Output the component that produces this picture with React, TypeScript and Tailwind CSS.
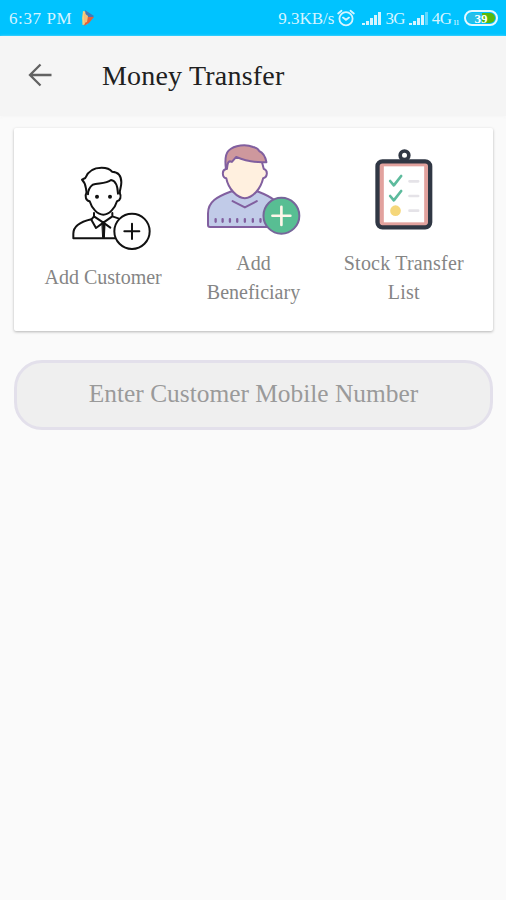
import { type ReactNode } from "react";

const PlayBadge = () => (
  <svg viewBox="0 0 14 18" className="w-[14px] h-[18px]">
    <path d="M2 2Q0.5 9 1.5 16L7 15V3Z" fill="#f6cf7e" />
    <path d="M4 1L13 7L8 12L5 9Z" fill="#3f79b8" />
    <path d="M6 8L13 8L8 14L3 17Z" fill="#e2603c" />
    <path d="M3 4L7 7L6 13L3 14Z" fill="#f4bd78" />
  </svg>
);

const AlarmIcon = () => (
  <svg viewBox="0 0 18 18" className="w-[18px] h-[18px]" fill="none" stroke="#d5f4ff" strokeWidth="1.8" strokeLinecap="round">
    <circle cx="9" cy="9.7" r="6.6" />
    <path d="M1.2 4.5L4.5 1.8M16.8 4.5L13.5 1.8M6 8.6L9 10.8L12 8.6" />
  </svg>
);

const SignalIcon = ({ weak = false }: { weak?: boolean }) => (
  <svg viewBox="0 0 20 15" className="w-[20px] h-[15px]" fill="#d5f4ff">
    <rect x="0" y="12" width="3" height="2" />
    <rect x="4" y="10" width="3" height="4" />
    <rect x="8" y="7" width="3" height="7" />
    <rect x="12" y="4" width="3" height="10" />
    <rect x="16" y="1" width="3" height="13" opacity={weak ? 0.45 : 1} />
  </svg>
);

const BackIcon = () => (
  <svg viewBox="0 0 24 24" className="w-6 h-6" fill="none" stroke="#626262" strokeWidth="2.3">
    <path d="M12.5 1.5L2 12L12.5 22.5M2 12H23.5" />
  </svg>
);

const CustomerIcon = () => (
  <svg
    viewBox="36 33 237 255"
    className="w-[79px] h-[85px]"
    fill="none"
    stroke="#111"
    strokeWidth="6"
    strokeLinecap="round"
    strokeLinejoin="round"
  >
    {/* Hair */}
    <path d="M80 112C76 98 80 87 66 74L76 69C83 50 101 38 125 38C143 38 151 43 156 50C177 51 184 65 184 82C184 95 180 102 179 113" />
    <path d="M84 118C84 104 88 97 98 89C116 84 139 86 153 75C168 77 173 94 174 116" />
    {/* Face */}
    <path d="M80 112C73 124 78 137 89 139C95 160 113 179 130 179C147 179 165 160 171 139C181 137 185 124 179 113" />
    <circle cx="111" cy="125" r="3" fill="#111" />
    <circle cx="150" cy="125" r="3" fill="#111" />
    {/* Shirt */}
    <path d="M102 174V184L130 203L157 184V174M102 184L94 194L108 219L130 203L151 218M157 184L175 190" />
    <path d="M94 193C64 200 40 213 40 236V250H166M131 204V249" />
    <path d="M127 209H135L133 248H129Z" fill="#111" strokeWidth="3" />
    <circle cx="216" cy="229" r="53" fill="#fff" />
    <path d="M193 229H238M216 206V252" />
  </svg>
);

const BeneficiaryIcon = () => (
  <svg
    viewBox="33 29 284 274"
    className="w-[95px] h-[91px]"
    fill="none"
    stroke="#815f9f"
    strokeWidth="6"
    strokeLinecap="round"
    strokeLinejoin="round"
  >
    <path d="M44 279Q38 279 38 273V238C38 202 65 188 107 172H188C229 188 258 204 258 240V279Z" fill="#c1cbe8" />
    <path d="M92 104C79 107 80 130 93 132C99 163 125 192 149 192C173 192 197 163 204 132C218 129 219 108 206 104L200 82L123 68L95 84Z" fill="#fff0df" />
    <path d="M92 104C89 81 88 61 100 49C118 32 152 29 174 38C184 40 190 44 192 50C207 56 211 69 214 84H201C184 84 154 82 123 68L110 83C98 77 97 87 95 104Z" fill="#ce989d" />
    <path d="M112 201L149 220L185 201" />
    <path d="M61 255V263M82 255V263M104 255V263M126 255V263M149 255V263M173 255V263M196 255V263" strokeWidth="7" />
    <circle cx="259" cy="245" r="54" fill="#58be93" stroke="#76669a" />
    <path d="M232 245H286M259 218V273" stroke="#fff6e9" strokeWidth="8" />
  </svg>
);

const StockListIcon = () => (
  <svg viewBox="43 25 173 243" className="w-[58px] h-[81px]" fill="none" strokeLinecap="round" strokeLinejoin="round">
    <circle cx="131" cy="44" r="13" stroke="#303744" strokeWidth="11" />
    <rect x="50" y="62" width="158" height="198" rx="15" fill="#e2a29e" stroke="#303744" strokeWidth="13" />
    <rect x="69" y="77" width="121" height="168" fill="#fff" />
    <path d="M88 121L99 134L121 106M88 166L99 179L121 151" stroke="#5dbb9d" strokeWidth="8" />
    <circle cx="104" cy="210" r="16" fill="#f5d77b" />
    <path d="M146 122H172M146 166H172M146 210H172" stroke="#e5e3e8" strokeWidth="8" />
  </svg>
);

interface ActionProps {
  icon: ReactNode;
  label: string;
  className: string;
}

const Action = ({ icon, label, className }: ActionProps) => (
  <button className={`flex flex-col items-center ${className}`}>
    {icon}
    <span className="max-w-[130px] text-[20px] leading-[29px] text-[#858585] text-center">{label}</span>
  </button>
);

export default function App() {
  return (
    <div className="w-full h-[900px] bg-[#fafafa] font-['Liberation_Serif',serif] overflow-hidden">
      {/* Status bar */}
      <div className="h-9 flex items-center bg-[#00c3ff] text-[#d5f4ff] text-[17px] leading-none pl-[9px] pr-2">
        <span className="tracking-[0.6px]">6:37 PM</span>
        <span className="ml-[9px]">
          <PlayBadge />
        </span>
        <span className="ml-auto">9.3KB/s</span>
        <span className="ml-[3px]">
          <AlarmIcon />
        </span>
        <span className="ml-[7px]">
          <SignalIcon />
        </span>
        <span className="ml-[3px] tracking-[-0.8px]">3G</span>
        <span className="ml-1">
          <SignalIcon weak />
        </span>
        <span className="ml-[3px] tracking-[-0.5px]">4G</span>
        <span className="text-[10px] mt-2 ml-[2px]">ıı</span>
        <div className="ml-[5px] w-[34px] h-4 p-px rounded-full border-2 border-[#e4f8ff]">
          <div className="h-full rounded-full bg-gradient-to-r from-[#27bfe9] from-55% to-[#58b90b] to-55% flex items-center justify-center text-[13px] leading-none font-bold text-white">
            39
          </div>
        </div>
      </div>

      {/* Toolbar */}
      <header className="h-20 flex items-center bg-[#f5f5f5] pl-7 shadow-[0_1px_3px_#f6f6f6]">
        <button aria-label="Back" className="-mt-[2px]">
          <BackIcon />
        </button>
        <h1 className="ml-[50px] text-[28px] leading-none text-[#202020] tracking-[0.2px]">Money Transfer</h1>
      </header>

      <main className="pl-[14px] pr-[13px] pt-3">
        {/* Actions */}
        <section className="h-[203px] grid grid-cols-3 items-start px-[14px] bg-white rounded-[2px] shadow-[0_1px_3px_rgba(0,0,0,0.28)]">
          <Action icon={<CustomerIcon />} label="Add Customer" className="pt-[38px] gap-3 pl-4 [&>span]:-ml-4" />
          <Action icon={<BeneficiaryIcon />} label="Add Beneficiary" className="pt-4 gap-[14px]" />
          <Action icon={<StockListIcon />} label="Stock Transfer List" className="pt-[21px] gap-[19px] tracking-[0.2px]" />
        </section>

        <input
          type="tel"
          placeholder="Enter Customer Mobile Number"
          className="block mt-[29px] w-full h-[70px] rounded-[28px] border-[3px] border-[#e3e0eb] bg-[#efefef] pb-[3px] text-center text-[25.4px] text-[#555] placeholder:text-[#9a9a9a] outline-none"
        />
      </main>
    </div>
  );
}
